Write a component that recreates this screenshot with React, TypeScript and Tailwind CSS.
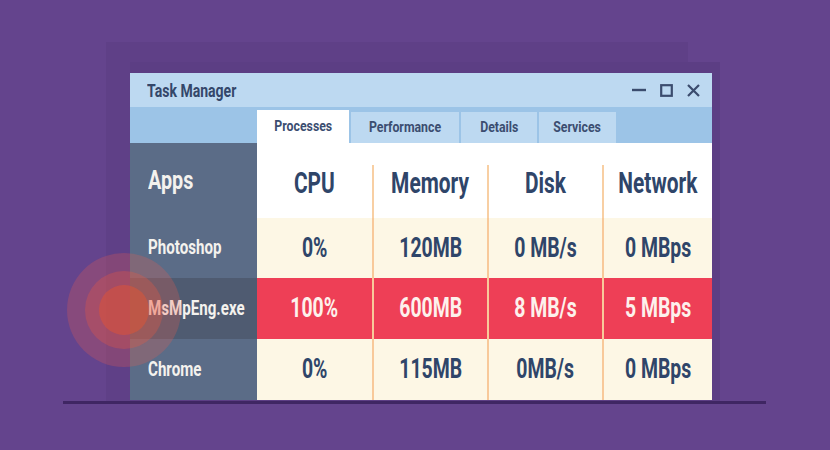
const font = { fontFamily: 'Roboto, "DejaVu Sans Condensed", "Liberation Sans", sans-serif' };

const tabs = [
  { label: 'Processes', w: 'w-[92px]', active: true },
  { label: 'Performance', w: 'w-[108px]', active: false },
  { label: 'Details', w: 'w-[76px]', active: false },
  { label: 'Services', w: 'w-[77px]', active: false },
];

const rows = [
  { app: 'Photoshop', cells: ['0%', '120MB', '0 MB/s', '0 MBps'], hot: false, h: 'h-[60px]' },
  { app: 'MsMpEng.exe', cells: ['100%', '600MB', '8 MB/s', '5 MBps'], hot: true, h: 'h-[61px]' },
  { app: 'Chrome', cells: ['0%', '115MB', '0MB/s', '0 MBps'], hot: false, h: 'h-[61px]' },
];

const headers = ['CPU', 'Memory', 'Disk', 'Network'];

export default function App() {
  return (
    <div className="relative w-[830px] h-[450px] overflow-hidden bg-[#64448d]" style={font}>
      {/* soft shadow behind the window */}
      <div className="absolute left-[106px] top-[42px] w-[582px] h-[360px] bg-[#5f4087]" />
      <div className="absolute left-[130px] top-[62px] w-[590px] h-[340px] bg-[#5c3e84]" />

      <div className="relative pt-[73px] pl-[130px]">
        {/* window */}
        <div className="w-[582px] flex flex-col">
          {/* title bar */}
          <div className="h-[34px] bg-[#bdd9f1] flex items-center justify-between pl-[17px] pr-[12px]">
            <span className="inline-block origin-left scale-x-[0.78] whitespace-nowrap text-[18px] font-bold text-[#34476a]">
              Task Manager
            </span>
            <div className="flex items-center gap-[14px] text-[#3b4c6e]">
              <svg width="14" height="14" viewBox="0 0 14 14">
                <path d="M0 7h14" stroke="currentColor" strokeWidth="2.4" />
              </svg>
              <svg width="13" height="13" viewBox="0 0 13 13">
                <rect x="1.2" y="1.2" width="10.6" height="10.6" fill="none" stroke="currentColor" strokeWidth="2.2" />
              </svg>
              <svg width="13" height="13" viewBox="0 0 13 13">
                <path d="M1 1l11 11M12 1L1 12" stroke="currentColor" strokeWidth="2.2" />
              </svg>
            </div>
          </div>

          {/* tab strip */}
          <div className="h-[36px] bg-[#9cc4e7] flex items-end gap-[2px] pl-[127px]">
            {tabs.map((t) => (
              <div
                key={t.label}
                className={`${t.w} flex items-center justify-center text-[15px] font-bold text-[#3b4d70] ${
                  t.active ? 'h-[33px] bg-white' : 'h-[31px] bg-[#bdd9f1]'
                }`}
              >
                <span className="inline-block scale-x-[0.82] whitespace-nowrap">{t.label}</span>
              </div>
            ))}
          </div>

          {/* table */}
          <div className="grid grid-cols-[127px_115px_115px_115px_110px]">
            <div className="h-[75px] bg-[#5b6c87] flex items-center pl-[18px] text-[26px] font-bold text-[#f4f2ee]">
              <span className="inline-block origin-left scale-x-[0.76]">Apps</span>
            </div>
            {headers.map((h, i) => (
              <div key={h} className="h-[75px] bg-white pt-[22px]">
                <div
                  className={`h-full flex items-center justify-center pb-[16px] text-[29px] font-bold text-[#2f4569] ${
                    i > 0 ? 'border-l-2 border-[#f8cfa3]' : ''
                  }`}
                >
                  <span className="inline-block scale-x-[0.72] whitespace-nowrap">{h}</span>
                </div>
              </div>
            ))}

            {rows.map((r) => (
              <div key={r.app} className="contents">
                <div
                  className={`${r.h} flex items-center pl-[18px] text-[21px] font-bold text-[#f4f2ee] ${
                    r.hot ? 'bg-[#4f5b71]' : 'bg-[#5b6c87]'
                  }`}
                >
                  <span className="inline-block origin-left scale-x-[0.72] whitespace-nowrap">{r.app}</span>
                </div>
                {r.cells.map((c, i) => (
                  <div
                    key={i}
                    className={`${r.h} flex items-center justify-center text-[27px] font-bold ${
                      i > 0 ? 'border-l-2 border-[#f8c99a]' : ''
                    } ${r.hot ? 'bg-[#ee3f56] text-[#fdf1ec]' : 'bg-[#fdf7e5] text-[#2f4569]'}`}
                  >
                    <span className="inline-block scale-x-[0.72] whitespace-nowrap">{c}</span>
                  </div>
                ))}
              </div>
            ))}
          </div>
        </div>

        {/* ground line */}
        <div className="mt-[1px] -ml-[67px] w-[703px] h-[3px] bg-[#3f2663]" />
      </div>

      {/* warning glow */}
      <div className="absolute left-[67px] top-[253px] w-[114px] h-[114px] rounded-full bg-[#f05a4a]/25" />
      <div className="absolute left-[85px] top-[271px] w-[78px] h-[78px] rounded-full bg-[#f05a3f]/30" />
      <div className="absolute left-[99px] top-[285px] w-[50px] h-[50px] rounded-full bg-[#e8552f]/45" />
    </div>
  );
}
